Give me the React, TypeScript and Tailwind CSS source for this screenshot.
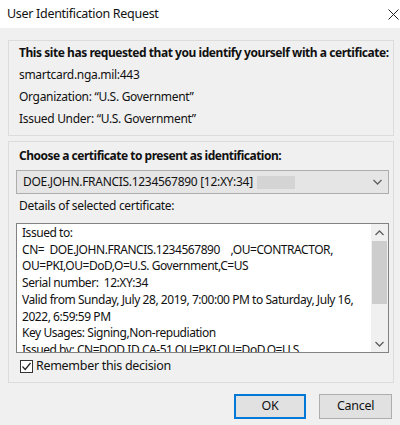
import React from 'react';

const FONT = "font-['Segoe_UI','Noto_Sans',sans-serif]";

const DETAILS = [
  'Issued to:',
  'CN=  DOE.JOHN.FRANCIS.1234567890    ,OU=CONTRACTOR,',
  'OU=PKI,OU=DoD,O=U.S. Government,C=US',
  'Serial number:  12:XY:34',
  'Valid from Sunday, July 28, 2019, 7:00:00 PM to Saturday, July 16,',
  '2022, 6:59:59 PM',
  'Key Usages: Signing,Non-repudiation',
  'Issued by: CN=DOD ID CA-51,OU=PKI,OU=DoD,O=U.S.',
];

function Chevron({ up = false }: { up?: boolean }) {
  return (
    <svg width="9" height="6" viewBox="0 0 9 6" className={up ? 'rotate-180' : ''}>
      <path d="M0.5 1 L4.5 5 L8.5 1" fill="none" stroke="#606060" strokeWidth="1.3" />
    </svg>
  );
}

export default function App() {
  return (
    <div className={`w-[400px] h-[425px] overflow-hidden bg-[#f0f0f0] flex flex-col text-[12px] tracking-[-0.3px] text-[#111] ${FONT}`}>
      {/* Title bar */}
      <div className="h-[28px] bg-white flex items-center justify-between pl-[7px] pr-[1px] shrink-0">
        <span className="text-[12.5px] leading-none">User Identification Request</span>
        <svg width="11" height="11" viewBox="0 0 11 11">
          <path d="M0.5 0.5 L10.5 10.5 M10.5 0.5 L0.5 10.5" stroke="#222" strokeWidth="1" />
        </svg>
      </div>

      <div className="pl-[8px] pr-[6px] flex flex-col">
        {/* Site group */}
        <div className="mt-[12px] h-[96px] border border-[#dcdcdc] pl-[10px] pt-[1px] flex flex-col">
          <div className="h-[22px] flex items-center font-bold tracking-[-0.45px] whitespace-nowrap">
            This site has requested that you identify yourself with a certificate:
          </div>
          <div className="h-[22px] flex items-center">smartcard.nga.mil:443</div>
          <div className="h-[22px] flex items-center">Organization: “U.S. Government”</div>
          <div className="h-[22px] flex items-center">Issued Under: “U.S. Government”</div>
        </div>

        {/* Certificate group */}
        <div className="mt-[5px] h-[242px] border border-[#dcdcdc] pl-[7px] pr-[4px] pt-[3px] flex flex-col">
          <div className="h-[22px] flex items-center pl-[3px] font-bold tracking-[-0.5px]">
            Choose a certificate to present as identification:
          </div>

          <div className="mt-[3px] h-[24px] bg-[#e5e5e5] border border-[#adadad] flex items-center pl-[6px] pr-[6px]">
            <span className="flex-1 flex items-center">
              DOE.JOHN.FRANCIS.1234567890 [12:XY:34]
              <span className="ml-[4px] w-[38px] h-[13px] bg-[#d4d4d4]" />
            </span>
            <Chevron />
          </div>

          <div className="h-[22px] flex items-center pl-[3px] mt-[1px]">Details of selected certificate:</div>

          <div className="mt-[6px] h-[130px] bg-white border border-[#828282] flex overflow-hidden">
            <div className="flex-1 pl-[5px] pt-[1px] leading-[16.7px] tracking-[-0.45px] overflow-hidden whitespace-pre">
              {DETAILS.map((l, i) => (
                <div key={i}>{l}</div>
              ))}
            </div>
            <div className="w-[17px] bg-[#f0f0f0] flex flex-col shrink-0">
              <div className="h-[17px] flex items-center justify-center">
                <Chevron up />
              </div>
              <div className="h-[63px] mx-[1px] bg-[#cdcdcd]" />
              <div className="flex-1" />
              <div className="h-[17px] flex items-center justify-center">
                <Chevron />
              </div>
            </div>
          </div>

          <label className="h-[26px] flex items-center pl-[4px] gap-[3px]">
            <span className="w-[13px] h-[13px] border border-[#333] bg-white flex items-center justify-center">
              <svg width="11" height="11" viewBox="0 0 11 11">
                <path d="M1.5 5.5 L4.2 8.5 L9.5 2" fill="none" stroke="#222" strokeWidth="1.2" />
              </svg>
            </span>
            <span className="text-[12.5px]">Remember this decision</span>
          </label>
        </div>

        {/* Buttons */}
        <div className="mt-[11px] flex justify-end gap-[13px] pr-[2px]">
          <button className="w-[72px] h-[25px] bg-[#e1e1e1] border-2 border-[#0078d7] text-[12.5px]">OK</button>
          <button className="w-[73px] h-[25px] bg-[#e1e1e1] border border-[#adadad] text-[12.5px]">Cancel</button>
        </div>
      </div>
    </div>
  );
}
